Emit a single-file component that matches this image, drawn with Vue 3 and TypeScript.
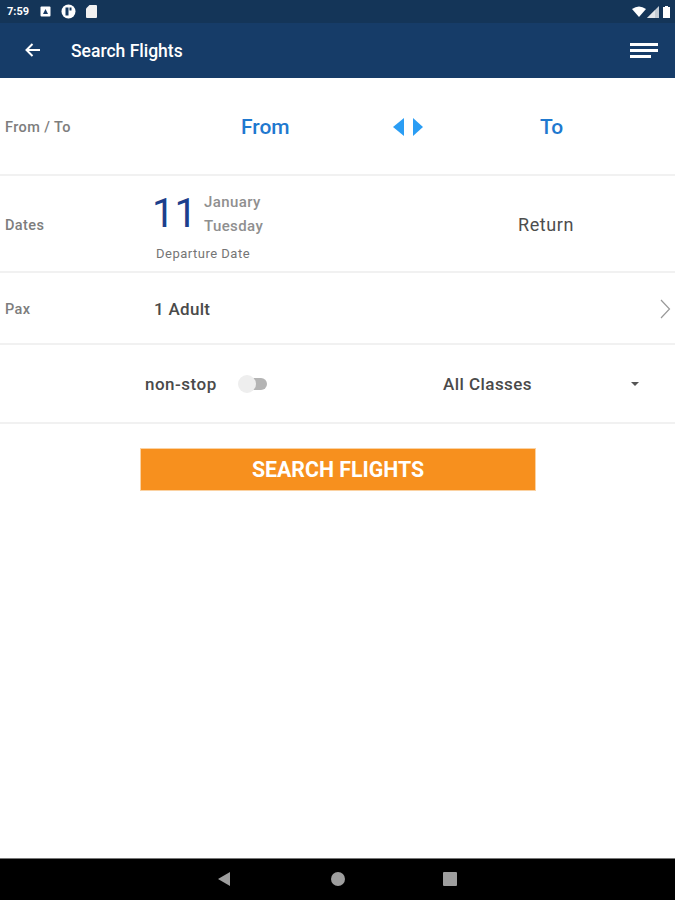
<script setup lang="ts">
const font = 'Roboto'
</script>

<template>
  <div class="screen" :data-font="font">
    <header class="appbar">
      <div class="status">
        <span class="time">7:59</span>
        <svg class="st-icon" width="11" height="11" viewBox="0 0 11 11">
          <rect x="0.5" y="0.5" width="10" height="10" rx="1" fill="#fff" />
          <path d="M3 8 L5.5 3 L8 8 Z" fill="#1a3c66" />
        </svg>
        <svg class="st-icon gap" width="15" height="15" viewBox="0 0 15 15">
          <circle cx="7.5" cy="7.5" r="7" fill="#fff" />
          <rect x="4.5" y="3.5" width="3" height="8" fill="#15395f" />
          <rect x="8.5" y="3.5" width="2" height="3" fill="#15395f" />
        </svg>
        <svg class="st-icon gap" width="11" height="13" viewBox="0 0 11 13">
          <path d="M3.5 0 H10 a1 1 0 0 1 1 1 V12 a1 1 0 0 1 -1 1 H1 a1 1 0 0 1 -1 -1 V3.5 Z" fill="#f2f2f2" />
        </svg>
        <span class="spacer"></span>
        <svg width="14" height="11" viewBox="0 0 14 11">
          <path d="M0 3 Q7 -2 14 3 L7 11 Z" fill="#fff" />
        </svg>
        <svg class="signal" width="12" height="12" viewBox="0 0 12 12">
          <path d="M12 0 V12 H0 Z" fill="#c4ccd4" />
          <path d="M8 4 V12 H0 Z" fill="#fff" opacity="0.5" />
        </svg>
        <svg class="battery" width="7" height="12" viewBox="0 0 7 12">
          <path d="M2 0 H5 V1 H7 V12 H0 V1 H2 Z" fill="#fff" />
        </svg>
      </div>
      <div class="toolbar">
        <svg class="back" width="16" height="14" viewBox="0 0 16 14">
          <path d="M15 7 H2 M7.5 1 L1.5 7 L7.5 13" fill="none" stroke="#fff" stroke-width="2" />
        </svg>
        <h1 class="title">Search Flights</h1>
        <span class="spacer"></span>
        <div class="menu">
          <i class="bar"></i>
          <i class="bar"></i>
          <i class="bar short"></i>
        </div>
      </div>
    </header>

    <main class="content">
      <section class="row route">
        <span class="label">From / To</span>
        <span class="place from">From</span>
        <svg class="swap" width="30" height="20" viewBox="0 0 30 20">
          <path d="M11 1 V19 L0 10 Z" fill="#2a9df4" />
          <path d="M20 1 V19 L30 10 Z" fill="#2a9df4" />
        </svg>
        <span class="place to">To</span>
      </section>

      <section class="row dates">
        <span class="label">Dates</span>
        <div class="depart">
          <div class="depart-top">
            <span class="day">11</span>
            <div class="month">
              <span>January</span>
              <span>Tuesday</span>
            </div>
          </div>
          <span class="depart-label">Departure Date</span>
        </div>
        <span class="return">Return</span>
      </section>

      <section class="row pax">
        <span class="label">Pax</span>
        <span class="pax-value">1 Adult</span>
        <svg class="chevron" width="11" height="20" viewBox="0 0 11 20">
          <path d="M1 1 L9.5 10 L1 19" fill="none" stroke="#999" stroke-width="1.2" />
        </svg>
      </section>

      <section class="row options">
        <span class="nonstop">non-stop</span>
        <div class="toggle">
          <span class="track"></span>
          <span class="thumb"></span>
        </div>
        <span class="classes">All Classes</span>
        <span class="caret"></span>
      </section>

      <div class="action">
        <button class="search" type="button">SEARCH FLIGHTS</button>
      </div>
    </main>

    <footer class="navbar">
      <svg width="14" height="16" viewBox="0 0 14 16">
        <path d="M13 1 V15 L1 8 Z" fill="#9e9e9e" />
      </svg>
      <span class="home"></span>
      <span class="recent"></span>
    </footer>
  </div>
</template>

<style>
html,
body {
  margin: 0;
  background: #fff;
}
</style>

<style scoped>
.screen {
  display: flex;
  flex-direction: column;
  width: 675px;
  height: 900px;
  overflow: hidden;
  font-family: Roboto, "Liberation Sans", sans-serif;
  background: #fff;
}

.appbar {
  height: 78px;
  background: #163c68;
  flex: none;
}

.status {
  display: flex;
  align-items: center;
  height: 23px;
  padding: 0 5px 0 7px;
  background: #143558;
  color: #fff;
}

.time {
  font-size: 11px;
  font-weight: 700;
  margin-right: 11px;
}

.st-icon.gap {
  margin-left: 10px;
}

.signal {
  margin-left: 1px;
}

.battery {
  margin-left: 4px;
}

.spacer {
  flex: 1;
}

.toolbar {
  display: flex;
  align-items: center;
  height: 55px;
  padding: 0 17px 0 25px;
}

.back {
  margin-right: 30px;
  margin-top: -2px;
}

.title {
  margin: 0;
  font-size: 17.5px;
  font-weight: 500;
  color: #fff;
}

.menu {
  display: flex;
  flex-direction: column;
  gap: 3px;
  width: 28px;
}

.bar {
  display: block;
  height: 3px;
  background: #fff;
}

.bar.short {
  width: 21px;
}

.content {
  flex: 1;
}

.row {
  display: flex;
  align-items: center;
  border-bottom: 2px solid #f1f1f1;
  box-sizing: border-box;
  padding-left: 5px;
}

.label {
  font-size: 14.5px;
  font-weight: 500;
  letter-spacing: 0.4px;
  color: #7d7d7d;
}

.route {
  height: 98px;
  padding-top: 2px;
}

.route .label {
  width: 236px;
}

.place {
  font-size: 21px;
  font-weight: 500;
  color: #1f79cf;
}

.from {
  width: 152px;
}

.swap {
  margin-right: 117px;
}

.dates {
  height: 97px;
}

.dates .label {
  width: 147px;
  margin-top: 3px;
}

.depart {
  width: 366px;
  display: flex;
  flex-direction: column;
  margin-top: 3px;
}

.depart-top {
  display: flex;
  align-items: center;
}

.day {
  font-size: 40px;
  font-weight: 400;
  color: #1c3f8c;
  width: 52px;
  line-height: 48px;
}

.month {
  display: flex;
  flex-direction: column;
  font-size: 15px;
  font-weight: 500;
  line-height: 24px;
  letter-spacing: 0.4px;
  color: #8f8f8f;
}

.depart-label {
  margin: 8px 0 0 4px;
  font-size: 13px;
  letter-spacing: 0.5px;
  color: #757575;
}

.return {
  margin-top: 1px;
  font-size: 18px;
  letter-spacing: 0.6px;
  color: #4d4d4d;
}

.pax {
  height: 72px;
  padding-top: 2px;
  padding-right: 4px;
}

.pax .label {
  width: 149px;
}

.pax-value {
  flex: 1;
  font-size: 17px;
  font-weight: 500;
  letter-spacing: 0.3px;
  color: #4a4a4a;
}

.options {
  height: 79px;
  padding-left: 145px;
}

.nonstop {
  width: 93px;
  font-size: 17px;
  font-weight: 500;
  letter-spacing: 0.5px;
  color: #4a4a4a;
}

.toggle {
  position: relative;
  width: 30px;
  height: 18px;
  margin-right: 175px;
}

.track {
  position: absolute;
  left: 4px;
  top: 3px;
  width: 25px;
  height: 12px;
  border-radius: 6px;
  background: #b4b4b4;
}

.thumb {
  position: absolute;
  left: 0;
  top: 0;
  width: 18px;
  height: 18px;
  border-radius: 50%;
  background: #eeeeee;
}

.classes {
  width: 187px;
  font-size: 17px;
  font-weight: 500;
  letter-spacing: 0.45px;
  color: #4a4a4a;
}

.caret {
  width: 0;
  height: 0;
  margin-left: 1px;
  border-left: 4px solid transparent;
  border-right: 4px solid transparent;
  border-top: 4px solid #555;
}

.action {
  display: flex;
  justify-content: center;
  padding-top: 24px;
}

.search {
  width: 396px;
  height: 43px;
  padding: 0;
  margin-left: 1px;
  border: 1px solid #fbd2a2;
  background: #f7901e;
  color: #fff;
  font-family: inherit;
  font-size: 21.3px;
  font-weight: 700;
}

.navbar {
  display: flex;
  align-items: center;
  flex: none;
  height: 42px;
  padding: 0 0 2px 217px;
  gap: 100px;
  border-top: 1px solid #777;
  box-sizing: border-box;
  background: #000;
}

.home {
  width: 14px;
  height: 14px;
  border-radius: 50%;
  background: #9e9e9e;
}

.recent {
  width: 14px;
  height: 14px;
  margin-left: -2px;
  border-radius: 1px;
  background: #9e9e9e;
}
</style>
